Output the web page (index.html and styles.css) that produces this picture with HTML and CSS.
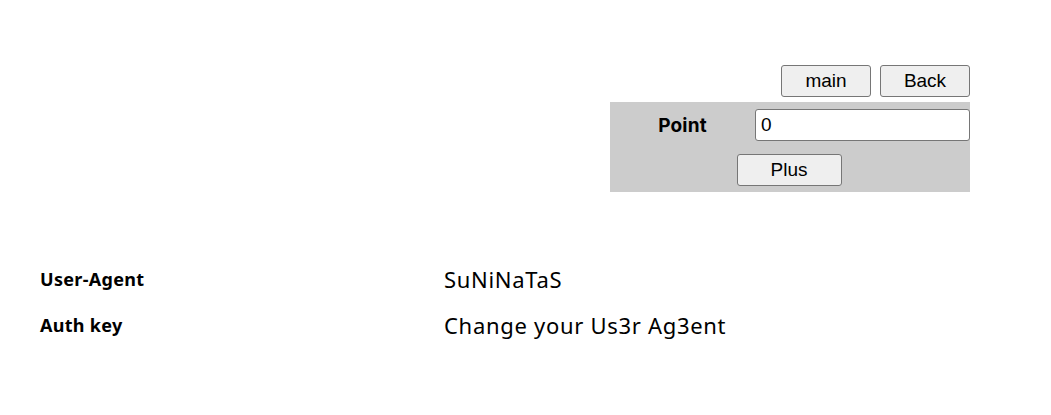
FILE: index.html
```html
<!DOCTYPE html>
<html>
<head>
<meta charset="utf-8">
<link rel="stylesheet" href="styles.css">
</head>
<body>
<div class="top">
  <div class="panel">
    <div class="nav">
      <button class="btn nav-btn">main</button>
      <button class="btn nav-btn">Back</button>
    </div>
    <div class="box">
      <div class="row">
        <span class="label">Point</span>
        <input class="field" type="text" value="0">
      </div>
      <div class="row center">
        <button class="btn plus">Plus</button>
      </div>
    </div>
  </div>
</div>
<div class="info">
  <div class="k">User-Agent</div>
  <div class="v">SuNiNaTaS</div>
  <div class="k">Auth key</div>
  <div class="v">Change your Us3r Ag3ent</div>
</div>
</body>
</html>
```
FILE: styles.css
```css
html, body { margin: 0; padding: 0; background: #fff; }
body { font-family: "Noto Sans", "Noto Sans CJK KR", sans-serif; color: #000; }
.top { display: flex; justify-content: flex-end; padding: 65px 81px 0 0; }
.panel { width: 360px; }
.nav { display: flex; justify-content: flex-end; gap: 9px; margin-bottom: 5px; }
.btn {
  font-family: "Liberation Sans", Arial, sans-serif;
  font-size: 19px;
  background: #efefef;
  border: 1px solid #767676;
  border-radius: 3px;
  color: #000;
  padding: 0;
  height: 32px;
  line-height: 30px;
  box-sizing: border-box;
}
.nav-btn { width: 90px; }
.box { background: #cccccc; padding: 7px 0 6px 0; display: flex; flex-direction: column; gap: 13px; }
.row { display: flex; align-items: center; }
.center { justify-content: center; padding-right: 2px; }
.label { width: 145px; text-align: center; font-family: "Inter", sans-serif; font-weight: 700; font-size: 19px; letter-spacing: 0.2px; }
.field {
  width: 215px; height: 32px; box-sizing: border-box;
  border: 1px solid #767676; border-radius: 3px;
  font-family: "Liberation Sans", Arial, sans-serif; font-size: 19px;
  padding: 0 5px; margin: 0; background: #fff; color: #000;
}
.plus { width: 105px; height: 32px; }
.info {
  display: grid; grid-template-columns: 404px 1fr; row-gap: 13px; align-items: center;
  padding: 71px 0 0 40px;
}
.k { font-weight: 700; font-size: 18px; line-height: 33px; letter-spacing: 0.3px; }
.v { font-size: 22px; line-height: 33px; letter-spacing: 0.7px; }
```
